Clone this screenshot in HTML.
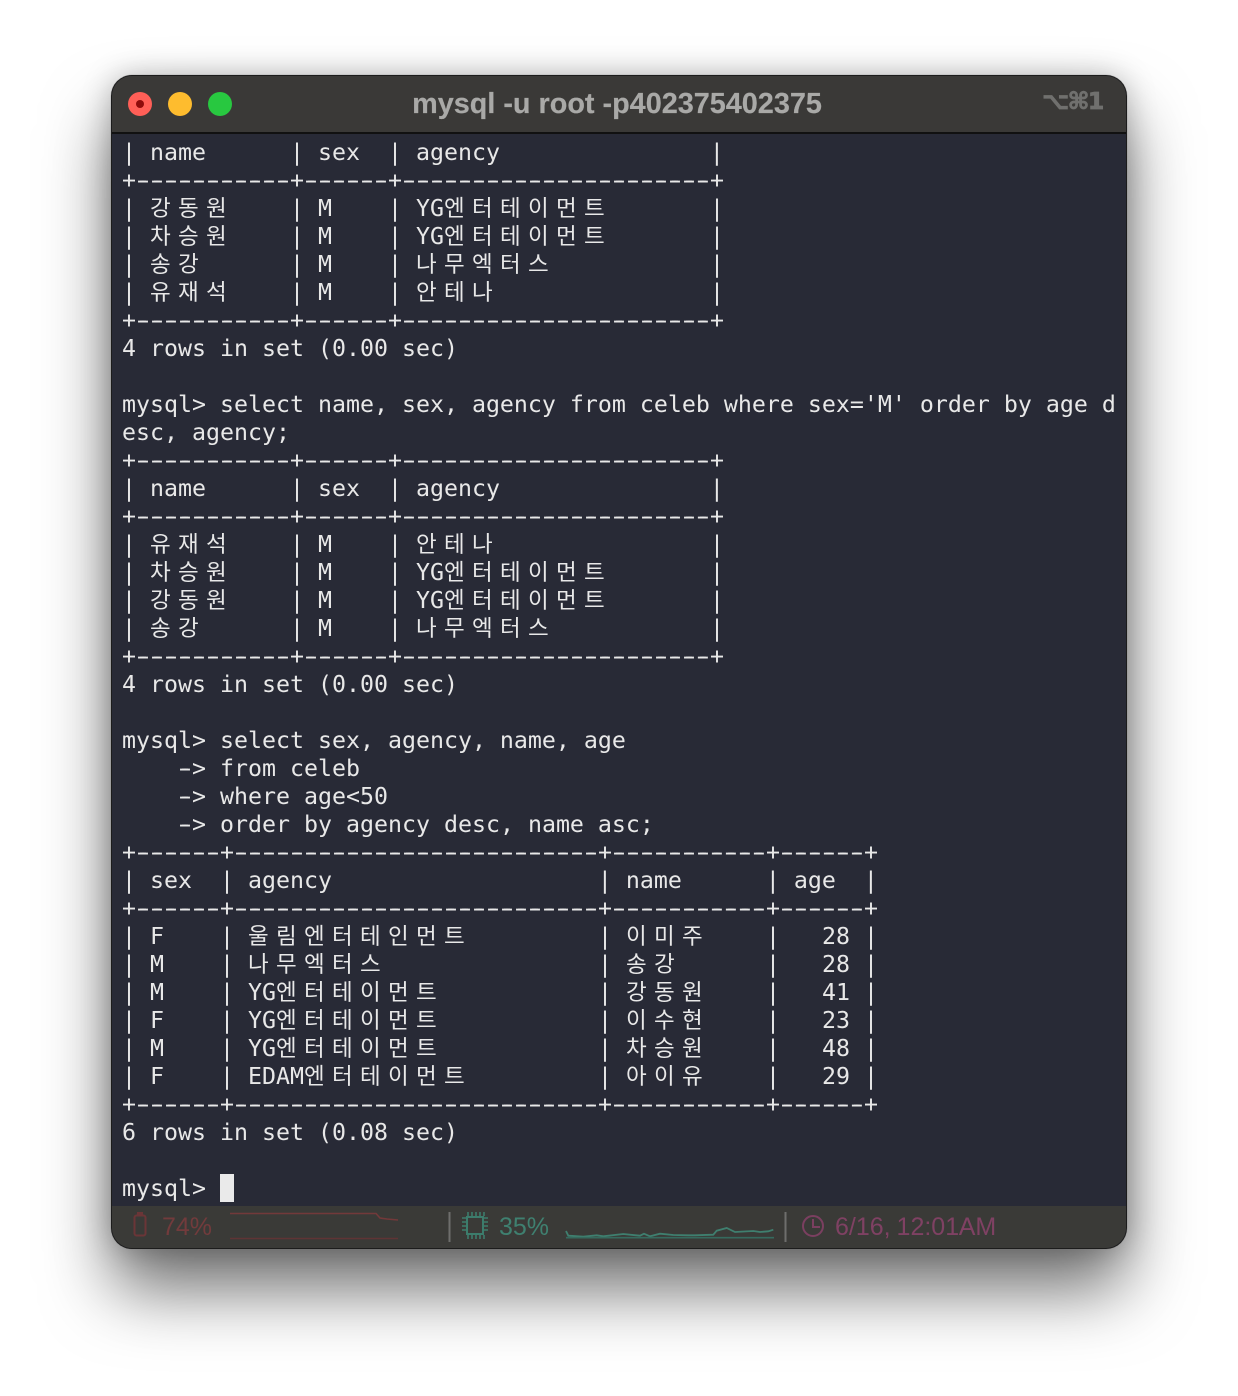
<!DOCTYPE html>
<html lang="ko"><head><meta charset="utf-8"><title>mysql</title>
<style>
html,body{margin:0;padding:0;background:#fff;width:1238px;height:1396px;overflow:hidden}
#w{position:absolute;left:112px;top:76px;width:1014px;height:1172px;border-radius:20px;background:#282a36;box-shadow:0 0 0 1px #1c1c1c,0 0 0 1.5px rgba(120,120,120,.3),0 42px 68px rgba(0,0,0,.56),0 0 30px rgba(0,0,0,.25);overflow:hidden}
#t{position:absolute;left:0;top:0;width:1014px;height:56px;background:#3a3937;border-bottom:2px solid #111}
.dot{position:absolute;top:92px;width:24px;height:24px;border-radius:50%}
#title{position:absolute;left:0;top:89px;width:1234px;text-align:center;font:bold 28.8px/30px "Liberation Sans",sans-serif;color:#a9a9a7;-webkit-text-stroke:.2px #a9a9a7}
#keys{position:absolute;left:1042px;top:86px;font:bold 23.5px/30px "DejaVu Sans",sans-serif;color:#70706e;letter-spacing:-1.5px;white-space:pre;-webkit-text-stroke:.8px #70706e}
#term{position:absolute;left:122px;top:139px;margin:0;font:23.25px/28px "DejaVu Sans Mono","Noto Sans CJK KR",monospace;color:#e8e8e8;white-space:pre}
#term i{font-style:normal;font-family:"Noto Sans CJK KR","DejaVu Sans Mono",sans-serif;letter-spacing:7.3px;font-size:22.5px;line-height:20px}
#term u{text-decoration:none;text-shadow:2px 0 #e8e8e8,-2px 0 #e8e8e8}
#cur{position:absolute;left:220px;top:1174px;width:14px;height:28px;background:#eaeaea}
#s{position:absolute;left:0;top:1130px;width:1014px;height:42px;background:#3a3a37}
.st{position:absolute;top:1212px;font:25px/30px "Liberation Sans",sans-serif;white-space:pre}
svg{position:absolute;left:0;top:0}
</style></head><body>
<div id="w"><div id="t"></div><div id="s"></div></div>
<div class="dot" style="left:128px;background:#ff5f57"></div>
<div class="dot" style="left:136px;top:100px;width:8px;height:8px;background:#8e0b0b"></div>
<div class="dot" style="left:168px;background:#febc2e"></div>
<div class="dot" style="left:208px;background:#28c840"></div>
<div id="title">mysql -u root -p402375402375</div>
<div id="keys">⌥⌘1</div>
<pre id="term">| name      | sex  | agency               |
+<u>-----------</u>+<u>------</u>+<u>----------------------</u>+
| <i>강동원</i>    | M    | YG<i>엔터테이먼트</i>       |
| <i>차승원</i>    | M    | YG<i>엔터테이먼트</i>       |
| <i>송강</i>      | M    | <i>나무엑터스</i>           |
| <i>유재석</i>    | M    | <i>안테나</i>               |
+<u>-----------</u>+<u>------</u>+<u>----------------------</u>+
4 rows in set (0.00 sec)

mysql> select name, sex, agency from celeb where sex='M' order by age d
esc, agency;
+<u>-----------</u>+<u>------</u>+<u>----------------------</u>+
| name      | sex  | agency               |
+<u>-----------</u>+<u>------</u>+<u>----------------------</u>+
| <i>유재석</i>    | M    | <i>안테나</i>               |
| <i>차승원</i>    | M    | YG<i>엔터테이먼트</i>       |
| <i>강동원</i>    | M    | YG<i>엔터테이먼트</i>       |
| <i>송강</i>      | M    | <i>나무엑터스</i>           |
+<u>-----------</u>+<u>------</u>+<u>----------------------</u>+
4 rows in set (0.00 sec)

mysql> select sex, agency, name, age
    <u>-</u>> from celeb
    <u>-</u>> where age&lt;50
    <u>-</u>> order by agency desc, name asc;
+<u>------</u>+<u>--------------------------</u>+<u>-----------</u>+<u>------</u>+
| sex  | agency                   | name      | age  |
+<u>------</u>+<u>--------------------------</u>+<u>-----------</u>+<u>------</u>+
| F    | <i>울림엔터테인먼트</i>         | <i>이미주</i>    |   28 |
| M    | <i>나무엑터스</i>               | <i>송강</i>      |   28 |
| M    | YG<i>엔터테이먼트</i>           | <i>강동원</i>    |   41 |
| F    | YG<i>엔터테이먼트</i>           | <i>이수현</i>    |   23 |
| M    | YG<i>엔터테이먼트</i>           | <i>차승원</i>    |   48 |
| F    | EDAM<i>엔터테이먼트</i>         | <i>아이유</i>    |   29 |
+<u>------</u>+<u>--------------------------</u>+<u>-----------</u>+<u>------</u>+
6 rows in set (0.08 sec)

mysql> </pre>
<div id="cur"></div>
<div class="st" style="left:162px;color:#723b3c">74%</div>
<div class="st" style="left:499px;color:#3f8070">35%</div>
<div class="st" style="left:835px;color:#7f4163;word-spacing:-1px">6/16, 12:01<span style="word-spacing:-6px"> AM</span></div>
<svg width="1238" height="1396" fill="none">
<rect x="134.5" y="1215.5" width="11" height="20" rx="2" stroke="#6b3537" stroke-width="2"/>
<rect x="137" y="1212" width="6" height="3" fill="#6b3537"/>
<path d="M230 1213.5H376L380 1218L387 1219L398 1220" stroke="#73393a" stroke-width="1.6"/>
<path d="M230 1238.5H398" stroke="#5f3435" stroke-width="1.6"/>
<path d="M449.5 1212V1242M785.5 1212V1242" stroke="#6e6e6c" stroke-width="2"/>
<rect x="467" y="1217" width="16" height="17" stroke="#3c7c6c" stroke-width="2"/>
<path d="M468 1212V1216M472 1212V1216M476 1212V1216M480 1212V1216M484 1212V1216M468 1235V1239M472 1235V1239M476 1235V1239M480 1235V1239M484 1235V1239M462 1218H466M462 1222H466M462 1226H466M462 1230H466M484 1218H488M484 1222H488M484 1226H488M484 1230H488" stroke="#3c7c6c" stroke-width="1.6"/>
<path d="M566 1231L568.3 1235.7L583.3 1236.7L596.7 1235.3L603.3 1236.3L623.3 1234L640 1235.7L644 1233.7L650 1236.3L660 1233.7L673.3 1235L688.3 1235.3L695 1235.3L713.3 1234.7L716.7 1230.7L726.7 1228L735 1232L753.3 1231L760 1232L768.3 1231.3L773.3 1229.7" stroke="#3f7f6f" stroke-width="1.8"/>
<path d="M566 1237.7H774" stroke="#356a5e" stroke-width="1.6"/>
<circle cx="813" cy="1226" r="10" stroke="#7b3f60" stroke-width="2"/>
<path d="M813 1219V1227H820" stroke="#7b3f60" stroke-width="2"/>
</svg>
</body></html>
